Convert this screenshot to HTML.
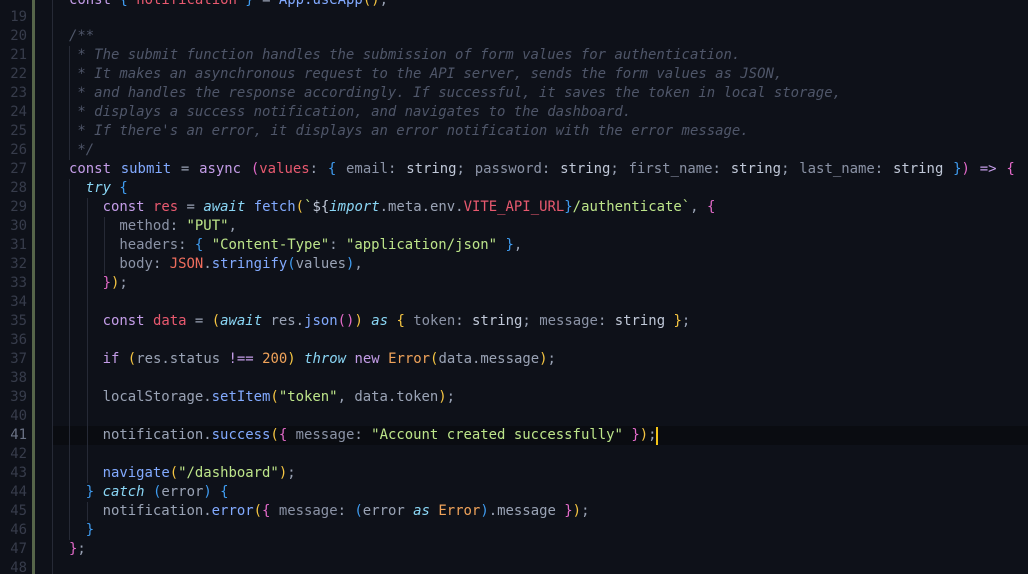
<!DOCTYPE html>
<html style="overflow:hidden;width:1028px;height:574px"><head><meta charset="utf-8"><style>
body{margin:0;width:1028px;height:574px;overflow:hidden;background:#0e1119;font-family:"DejaVu Sans Mono","Liberation Mono",monospace;font-size:13.95px;position:relative}
#w{position:absolute;left:0;top:2px;width:1028px;height:572px;overflow:hidden}
.ln{position:absolute;left:0;width:27px;text-align:right;color:#373c4b;height:19px;line-height:19px}
.l{position:absolute;left:69px;height:19px;line-height:19px;white-space:pre;color:#9aa3b5}
.g{position:absolute;width:1px;background:#262a36}
.c{color:#4f5669;font-style:italic}
.k{color:#c49de8}.f{color:#82aaff}.v{color:#e8596f}.s{color:#bde58a}.t{color:#c0c8d8}.p{color:#8b93a6}
.i{color:#8ad6f5;font-style:italic}.o{color:#f0a35a}.y{color:#f5c542}.pk{color:#e36ac9}.b{color:#3f9cf0}.e{color:#f0a35a}.r{color:#ef6d5d}
</style></head><body>
<div style="position:absolute;left:32px;top:0;width:3px;height:574px;background:#56654a"></div>
<div class="g" style="left:52px;top:0;height:574px"></div>
<div style="position:absolute;left:69px;top:-9px;height:19px;line-height:19px;white-space:pre;color:#9aa3b5"><span class="k">const</span> <span class="b">{</span> <span class="v">notification</span> <span class="b">}</span> = <span class="f">App.useApp</span><span class="y">()</span>;</div>
<div id="w">
<div style="position:absolute;left:53px;top:424px;width:975px;height:19px;background:#0a0c11"></div>
<div class="g" style="left:69px;top:44px;height:114px"></div>
<div class="g" style="left:69px;top:177px;height:361px"></div>
<div class="g" style="left:87px;top:196px;height:285px"></div>
<div class="g" style="left:87px;top:500px;height:19px"></div>
<div class="g" style="left:104px;top:215px;height:57px"></div>
<div style="position:absolute;left:656px;top:425px;width:2px;height:18px;background:#f5c518"></div>

<div class="ln" style="top:6px">19</div>
<div class="ln" style="top:25px">20</div><div class="l c" style="top:25px">/**</div>
<div class="ln" style="top:44px">21</div><div class="l c" style="top:44px"> * The submit function handles the submission of form values for authentication.</div>
<div class="ln" style="top:63px">22</div><div class="l c" style="top:63px"> * It makes an asynchronous request to the API server, sends the form values as JSON,</div>
<div class="ln" style="top:82px">23</div><div class="l c" style="top:82px"> * and handles the response accordingly. If successful, it saves the token in local storage,</div>
<div class="ln" style="top:101px">24</div><div class="l c" style="top:101px"> * displays a success notification, and navigates to the dashboard.</div>
<div class="ln" style="top:120px">25</div><div class="l c" style="top:120px"> * If there's an error, it displays an error notification with the error message.</div>
<div class="ln" style="top:139px">26</div><div class="l c" style="top:139px"> */</div>
<div class="ln" style="top:158px">27</div><div class="l" style="top:158px;word-spacing:1.4px"><span class="k">const</span> <span class="f">submit</span> = <span class="k">async</span> <span class="pk">(</span><span class="v">values</span>: <span class="b">{</span> <span class="p">email</span>: <span class="t">string</span>; <span class="p">password</span>: <span class="t">string</span>; <span class="p">first_name</span>: <span class="t">string</span>; <span class="p">last_name</span>: <span class="t">string</span> <span class="b">}</span><span class="pk">)</span> <span class="k">=&gt;</span> <span class="pk">{</span></div>
<div class="ln" style="top:177px">28</div><div class="l" style="top:177px">  <span class="i">try</span> <span class="b">{</span></div>
<div class="ln" style="top:196px">29</div><div class="l" style="top:196px">    <span class="k">const</span> <span class="v">res</span> = <span class="i">await</span> <span class="f">fetch</span><span class="y">(</span><span class="s">`</span><span class="t">${</span><span class="i">import</span>.meta.env.<span class="v">VITE_API_URL</span><span class="b">}</span><span class="s">/authenticate`</span>, <span class="pk">{</span></div>
<div class="ln" style="top:215px">30</div><div class="l" style="top:215px">      <span class="p">method</span>: <span class="s">"PUT"</span>,</div>
<div class="ln" style="top:234px">31</div><div class="l" style="top:234px">      <span class="p">headers</span>: <span class="b">{</span> <span class="s">"Content-Type"</span>: <span class="s">"application/json"</span> <span class="b">}</span>,</div>
<div class="ln" style="top:253px">32</div><div class="l" style="top:253px">      <span class="p">body</span>: <span class="r">JSON</span>.<span class="f">stringify</span><span class="b">(</span>values<span class="b">)</span>,</div>
<div class="ln" style="top:272px">33</div><div class="l" style="top:272px">    <span class="pk">}</span><span class="y">)</span>;</div>
<div class="ln" style="top:291px">34</div>
<div class="ln" style="top:310px">35</div><div class="l" style="top:310px">    <span class="k">const</span> <span class="v">data</span> = <span class="y">(</span><span class="i">await</span> res.<span class="f">json</span><span class="pk">()</span><span class="y">)</span> <span class="i">as</span> <span class="y">{</span> <span class="p">token</span>: <span class="t">string</span>; <span class="p">message</span>: <span class="t">string</span> <span class="y">}</span>;</div>
<div class="ln" style="top:329px">36</div>
<div class="ln" style="top:348px">37</div><div class="l" style="top:348px">    <span class="k">if</span> <span class="y">(</span>res.status <span class="k">!==</span> <span class="o">200</span><span class="y">)</span> <span class="i">throw</span> <span class="k">new</span> <span class="e">Error</span><span class="y">(</span>data.message<span class="y">)</span>;</div>
<div class="ln" style="top:367px">38</div>
<div class="ln" style="top:386px">39</div><div class="l" style="top:386px">    localStorage.<span class="f">setItem</span><span class="y">(</span><span class="s">"token"</span>, data.token<span class="y">)</span>;</div>
<div class="ln" style="top:405px">40</div>
<div class="ln" style="top:424px;color:#6b7386">41</div><div class="l" style="top:424px">    notification.<span class="f">success</span><span class="y">(</span><span class="pk">{</span> <span class="p">message</span>: <span class="s">"Account created successfully"</span> <span class="pk">}</span><span class="y">)</span>;</div>
<div class="ln" style="top:443px">42</div>
<div class="ln" style="top:462px">43</div><div class="l" style="top:462px">    <span class="f">navigate</span><span class="y">(</span><span class="s">"/dashboard"</span><span class="y">)</span>;</div>
<div class="ln" style="top:481px">44</div><div class="l" style="top:481px">  <span class="b">}</span> <span class="i">catch</span> <span class="b">(</span>error<span class="b">)</span> <span class="b">{</span></div>
<div class="ln" style="top:500px">45</div><div class="l" style="top:500px">    notification.<span class="f">error</span><span class="y">(</span><span class="pk">{</span> <span class="p">message</span>: <span class="b">(</span>error <span class="i">as</span> <span class="e">Error</span><span class="b">)</span>.message <span class="pk">}</span><span class="y">)</span>;</div>
<div class="ln" style="top:519px">46</div><div class="l" style="top:519px">  <span class="b">}</span></div>
<div class="ln" style="top:538px">47</div><div class="l" style="top:538px"><span class="pk">}</span>;</div>
<div class="ln" style="top:557px">48</div>
</div>
</body></html>
